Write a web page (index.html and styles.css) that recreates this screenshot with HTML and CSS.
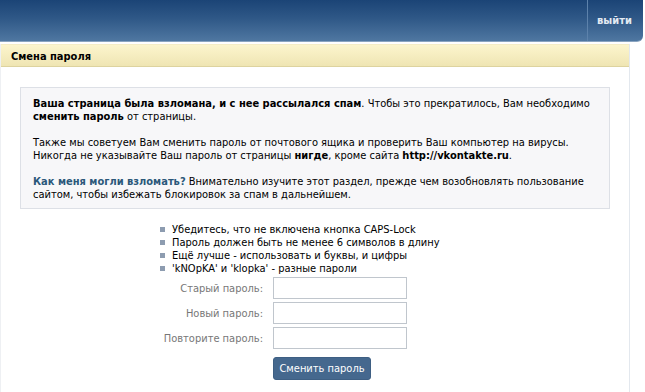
FILE: index.html
```html
<!DOCTYPE html>
<html lang="ru">
<head>
  <meta charset="UTF-8">
  <title>Смена пароля</title>
  <link rel="stylesheet" href="styles.css">
</head>
<body>
  <div class="header">
    <div class="header-space"></div>
    <a class="logout" href="#">выйти</a>
  </div>

  <div class="page">
    <div class="title-bar">Смена пароля</div>

    <div class="content">
      <div class="notice">
        <p><b>Ваша страница была взломана, и с нее рассылался спам</b>. Чтобы это прекратилось, Вам необходимо <b>сменить пароль</b> от страницы.</p>
        <p>Также мы советуем Вам сменить пароль от почтового ящика и проверить Ваш компьютер на вирусы. Никогда не указывайте Ваш пароль от страницы <b>нигде</b>, кроме сайта <b>http://vkontakte.ru</b>.</p>
        <p><a class="how" href="#">Как меня могли взломать?</a> Внимательно изучите этот раздел, прежде чем возобновлять пользование сайтом, чтобы избежать блокировок за спам в дальнейшем.</p>
      </div>

      <ul class="tips">
        <li>Убедитесь, что не включена кнопка CAPS-Lock</li>
        <li>Пароль должен быть не менее 6 символов в длину</li>
        <li>Ещё лучше - использовать и буквы, и цифры</li>
        <li>'kNOpKA' и 'klopka' - разные пароли</li>
      </ul>

      <form class="pass-form">
        <div class="row">
          <label for="old">Старый пароль:</label>
          <input type="password" id="old">
        </div>
        <div class="row">
          <label for="new1">Новый пароль:</label>
          <input type="password" id="new1">
        </div>
        <div class="row">
          <label for="new2">Повторите пароль:</label>
          <input type="password" id="new2">
        </div>
        <div class="row">
          <span class="spacer"></span>
          <button type="button" class="btn">Сменить пароль</button>
        </div>
      </form>
    </div>
  </div>
</body>
</html>
```

FILE: styles.css
```css
* {
  box-sizing: border-box;
  margin: 0;
  padding: 0;
}

body {
  font-family: 'DejaVu Sans Condensed', 'DejaVu Sans', sans-serif;
  font-size: 11px;
  line-height: 13px;
  color: #000;
  background: #fff;
  overflow: hidden;
}

a {
  text-decoration: none;
}

.header {
  display: flex;
  width: 643px;
  height: 42px;
  background: linear-gradient(#1b4476, #2f5887 45%, #4f77a1);
  border-bottom: 1px solid #8aa4c0;
  border-bottom-right-radius: 6px;
}

.header-space {
  flex: 1;
}

.logout {
  display: flex;
  align-items: center;
  width: 56px;
  padding-left: 9px;
  border-left: 1px solid #5d82ab;
  color: #e3eaf2;
  font-weight: bold;
  font-size: 11px;
}

.page {
  width: 630px;
  min-height: 360px;
  border-right: 1px solid #e3e8ee;
  border-left: 1px solid #eef0f3;
}

.title-bar {
  margin-top: 2px;
  height: 23px;
  padding: 5px 0 0 10px;
  background: linear-gradient(#fcf5cd, #efe5b3);
  border-top: 1px solid #f5edc6;
  border-bottom: 1px solid #ddd39f;
  font-weight: bold;
}

.content {
  padding: 20px 19px 0 19px;
}

.notice {
  background: #f7f7f9;
  border: 1px solid #dde0e6;
  padding: 9px 12px 7px 12px;
}

.notice p + p {
  margin-top: 13px;
}

.how {
  color: #2b587a;
  font-weight: bold;
}

.tips {
  list-style: none;
  margin: 14px 0 0 140px;
}

.tips li {
  display: flex;
  align-items: center;
  gap: 7px;
}

.tips li::before {
  content: '';
  width: 5px;
  height: 5px;
  background: #8d9cb0;
}

.pass-form {
  margin-top: 2px;
  display: flex;
  flex-direction: column;
  gap: 3px;
}

.row {
  display: flex;
  align-items: center;
  gap: 10px;
}

.row label,
.spacer {
  width: 243px;
  text-align: right;
  color: #777;
}

.row input {
  width: 134px;
  height: 22px;
  border: 1px solid #c0c6cd;
  font: inherit;
}

.spacer {
  height: 1px;
}

.btn {
  margin-top: 5px;
  width: 98px;
  height: 23px;
  background: #45688e;
  border: 1px solid #3e5f83;
  border-radius: 3px;
  color: #fff;
  font: inherit;
  cursor: pointer;
}
```
